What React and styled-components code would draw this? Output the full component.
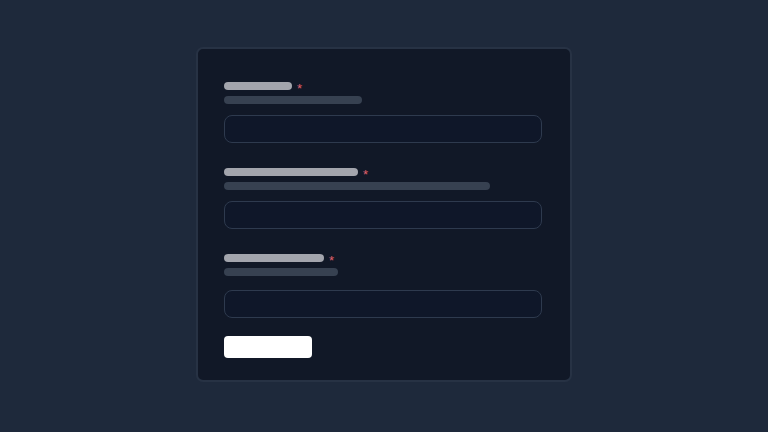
import React from "react";
import styled, { createGlobalStyle } from "styled-components";

const GlobalStyle = createGlobalStyle`
  html, body {
    margin: 0;
    padding: 0;
    background: #1e293b;
    font-family: "Inter", "Liberation Sans", sans-serif;
  }
  * { box-sizing: border-box; }
`;

const FIELDS = [
  { id: "name", label: 68, hint: 138, gap: 11 },
  { id: "email", label: 134, hint: 266, gap: 11 },
  { id: "phone", label: 100, hint: 114, gap: 14 },
];

const Page = styled.div`
  min-height: 100vh;
  display: flex;
  justify-content: center;
  align-items: flex-start;
  padding-top: 47px;
`;

const Card = styled.form`
  width: 376px;
  background: #111827;
  border: 2px solid #273244;
  border-radius: 7px;
  padding: 33px 28px 22px 26px;
  display: flex;
  flex-direction: column;
`;

const Field = styled.div`
  display: flex;
  flex-direction: column;
  margin-bottom: ${(p) => (p.$last ? 18 : 25)}px;
`;

const LabelRow = styled.div`
  display: flex;
  align-items: center;
  gap: 5px;
  height: 8px;
`;

const LabelBar = styled.div`
  height: 8px;
  border-radius: 4px;
  background: #a3a5ad;
`;

const Required = styled.span`
  color: #e0606d;
  font-family: "Liberation Sans", sans-serif;
  font-size: 13px;
  line-height: 8px;
  margin-top: 6px;
`;

const HintBar = styled.div`
  height: 8px;
  margin-top: 6px;
  border-radius: 4px;
  background: #374151;
`;

const Input = styled.input`
  height: 28px;
  width: 100%;
  margin-top: ${(p) => p.$gap}px;
  background: #0f1729;
  border: 1px solid #2e3a4e;
  border-radius: 8px;
  outline: none;
  color: #e5e7eb;
  font: inherit;
  padding: 0 10px;
`;

const Submit = styled.button`
  width: 88px;
  height: 22px;
  background: #ffffff;
  border: none;
  border-radius: 4px;
  padding: 0;
  cursor: pointer;
`;

export default function App() {
  return (
    <>
      <GlobalStyle />
      <Page>
        <Card onSubmit={(e) => e.preventDefault()}>
          {FIELDS.map((f, i) => (
            <Field key={f.id} $last={i === FIELDS.length - 1}>
              <LabelRow>
                <LabelBar style={{ width: f.label }} />
                <Required>*</Required>
              </LabelRow>
              <HintBar style={{ width: f.hint }} />
              <Input $gap={f.gap} aria-label={f.id} />
            </Field>
          ))}
          <Submit type="submit" aria-label="submit" />
        </Card>
      </Page>
    </>
  );
}
